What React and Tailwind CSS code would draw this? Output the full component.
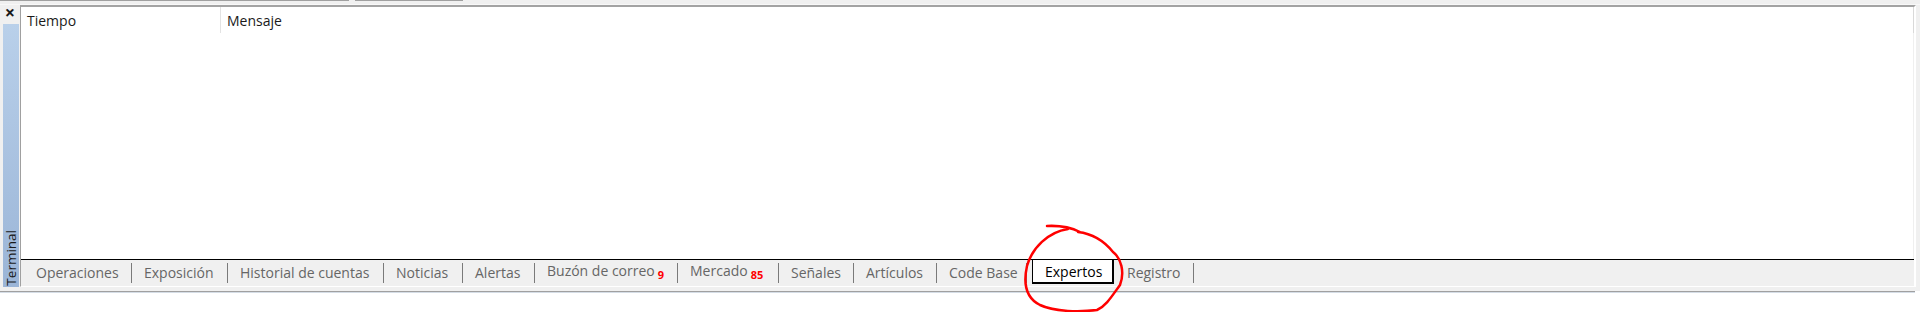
import React from "react";

const tabs = [
  { label: "Operaciones", cls: "w-[110px] pl-[15px]" },
  { label: "Exposición", cls: "w-[95px] pl-[12px]" },
  { label: "Historial de cuentas", cls: "w-[155px] pl-[12px]" },
  { label: "Noticias", cls: "w-[78px] pl-[12px]" },
  { label: "Alertas", cls: "w-[71px] pl-[12px]" },
  { label: "Buzón de correo", badge: "9", cls: "w-[142px] pl-[12px]" },
  { label: "Mercado", badge: "85", cls: "w-[100px] pl-[12px]" },
  { label: "Señales", cls: "w-[74px] pl-[12px]" },
  { label: "Artículos", cls: "w-[82px] pl-[12px]" },
  { label: "Code Base", cls: "w-[89px] pl-[12px]" },
];

function Sep() {
  return <span className="h-[20px] w-px shrink-0 bg-[#7a7a7a]" />;
}

function Tab({ label, badge, cls }) {
  return (
    <>
      <div className={`flex h-full shrink-0 items-center whitespace-nowrap pb-[2px] ${cls}`}>
        <span>
          {label}
          {badge ? (
            <span className="ml-[3px] align-[-3px] text-[11px] font-bold text-[#ff0000]">
              {badge}
            </span>
          ) : null}
        </span>
      </div>
      <Sep />
    </>
  );
}

export default function App() {
  return (
    <div className="relative h-[312px] w-[1920px] overflow-hidden bg-white font-['Open_Sans',sans-serif] text-[14px]">
      {/* top edge of the window above */}
      <div className="flex h-px bg-[#f0f0f0]">
        <div className="w-[349px] bg-[#a0a0a0]" />
        <div className="w-[6px]" />
        <div className="w-[108px] bg-[#a0a0a0]" />
      </div>
      <div className="h-[3px] bg-[#f0f0f0]" />
      <div className="h-px bg-[#f8f8f8]" />

      <div className="flex h-[286px] bg-[#f0f0f0]">
        {/* side strip */}
        <div className="flex w-[20px] shrink-0 flex-col">
          <div className="flex h-[19px] items-center justify-center pb-[5px] text-[18px] font-bold leading-none text-[#1a1a1a]">
            ×
          </div>
          <div className="ml-[3px] flex h-[263px] w-[16px] flex-col justify-end bg-linear-to-b from-[#b9d0ea] to-[#9bb5d7] pb-[1px]">
            <span className="rotate-180 text-[13.5px] leading-[16px] text-[#1a1a1a] [writing-mode:vertical-rl]">
              Terminal
            </span>
          </div>
        </div>

        {/* panel */}
        <div className="flex h-[282px] w-[1896px] shrink-0 flex-col border-t-2 border-r-2 border-b border-l border-t-[#a3a3a3] border-r-white border-b-white border-l-[#a0a0a0] bg-white">
          <div className="flex h-[26px] shrink-0 border-r border-[#d9d9d9] text-[#1a1a1a]">
            <div className="flex w-[200px] items-center border-r border-[#e3e3e3] pl-[6px]">
              Tiempo
            </div>
            <div className="flex items-center pl-[6px]">Mensaje</div>
          </div>
          <div className="flex-1 border-r border-[#efefef]" />
          <div className="flex h-[27px] shrink-0 items-center border-t border-black bg-[#f0f0f0] text-[#666666]">
            {tabs.map((t) => (
              <Tab key={t.label} {...t} />
            ))}
            <div className="w-[5px] shrink-0" />
            <div className="-mt-px flex h-[25px] w-[82px] shrink-0 items-center self-start border border-r-2 border-b-2 border-black bg-white pl-[12px] text-black">
              Expertos
            </div>
            <div className="flex h-full w-[79px] shrink-0 items-center pb-[2px] pl-[13px]">
              Registro
            </div>
            <Sep />
          </div>
        </div>
        <div className="w-[4px] shrink-0" />
      </div>

      <div className="h-px w-[1915px] bg-[#a0a0a0]" />
      <div className="h-px w-[1915px] bg-[#d5dde6]" />

      {/* hand-drawn annotation */}
      <svg
        className="pointer-events-none absolute inset-0"
        width="1920"
        height="312"
        viewBox="0 0 1920 312"
      >
        <path
          d="M1047 226 Q1066 225 1080 232 M1068 229 C1048 232 1032 248 1027 266 C1023 284 1026 298 1040 305 C1055 312 1080 312 1097 310 C1106 306 1112 296 1120 285 C1125 272 1121 258 1113 252 C1105 242 1095 234 1078 232"
          fill="none"
          stroke="#ff0000"
          strokeWidth="2.5"
          strokeLinecap="round"
        />
      </svg>
    </div>
  );
}
